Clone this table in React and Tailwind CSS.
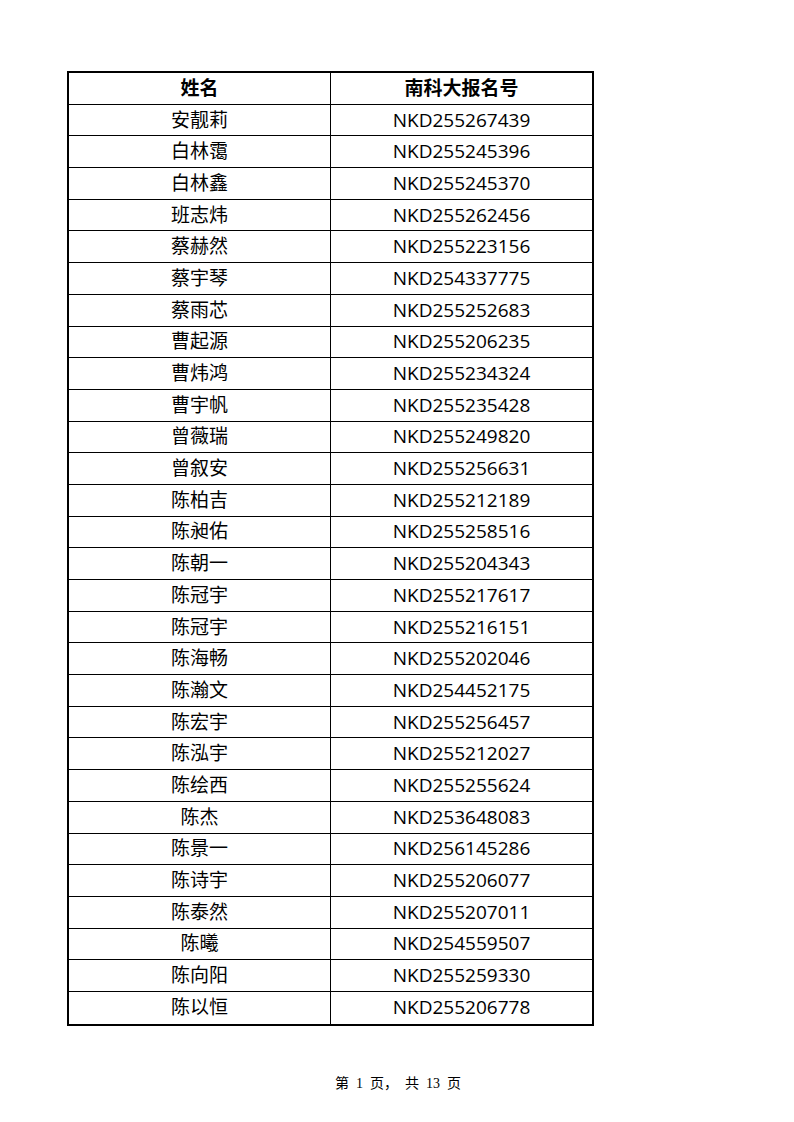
import React from 'react';

const rows = [
  ['安靓莉', 'NKD255267439'],
  ['白林霭', 'NKD255245396'],
  ['白林鑫', 'NKD255245370'],
  ['班志炜', 'NKD255262456'],
  ['蔡赫然', 'NKD255223156'],
  ['蔡宇琴', 'NKD254337775'],
  ['蔡雨芯', 'NKD255252683'],
  ['曹起源', 'NKD255206235'],
  ['曹炜鸿', 'NKD255234324'],
  ['曹宇帆', 'NKD255235428'],
  ['曾薇瑞', 'NKD255249820'],
  ['曾叙安', 'NKD255256631'],
  ['陈柏吉', 'NKD255212189'],
  ['陈昶佑', 'NKD255258516'],
  ['陈朝一', 'NKD255204343'],
  ['陈冠宇', 'NKD255217617'],
  ['陈冠宇', 'NKD255216151'],
  ['陈海畅', 'NKD255202046'],
  ['陈瀚文', 'NKD254452175'],
  ['陈宏宇', 'NKD255256457'],
  ['陈泓宇', 'NKD255212027'],
  ['陈绘西', 'NKD255255624'],
  ['陈杰', 'NKD253648083'],
  ['陈景一', 'NKD256145286'],
  ['陈诗宇', 'NKD255206077'],
  ['陈泰然', 'NKD255207011'],
  ['陈曦', 'NKD254559507'],
  ['陈向阳', 'NKD255259330'],
  ['陈以恒', 'NKD255206778'],
];

const font = { fontFamily: '"Open Sans", "Noto Sans CJK SC", sans-serif' };

function Row({ name, id, last }) {
  return (
    <div className={`flex h-[31.7px] ${last ? '' : 'border-b-[1.5px] border-black'}`}>
      <div className="w-[262px] flex items-center justify-center border-r-[1.5px] border-black">
        {name}
      </div>
      <div className="flex-1 flex items-center justify-center">{id}</div>
    </div>
  );
}

export default function App() {
  return (
    <div className="w-[794px] h-[1122px] bg-white">
      <div className="pt-[71px] pl-[67px]">
        <div className="w-[527px] border-2 border-black text-[19px] text-black leading-none" style={font}>
          <div className="font-bold">
            <Row name="姓名" id="南科大报名号" />
          </div>
          {rows.map((r, i) => (
            <Row key={i} name={r[0]} id={r[1]} last={i === rows.length - 1} />
          ))}
        </div>
      </div>
      {/* page footer */}
      <div
        className="mt-[51px] flex justify-center gap-[7px] text-[14px] leading-none text-black pl-[2px]"
        style={{ fontFamily: '"Liberation Serif", "Noto Sans CJK SC", serif' }}
      >
        <span>第</span>
        <span>1</span>
        <span>页，</span>
        <span>共</span>
        <span>13</span>
        <span>页</span>
      </div>
    </div>
  );
}
